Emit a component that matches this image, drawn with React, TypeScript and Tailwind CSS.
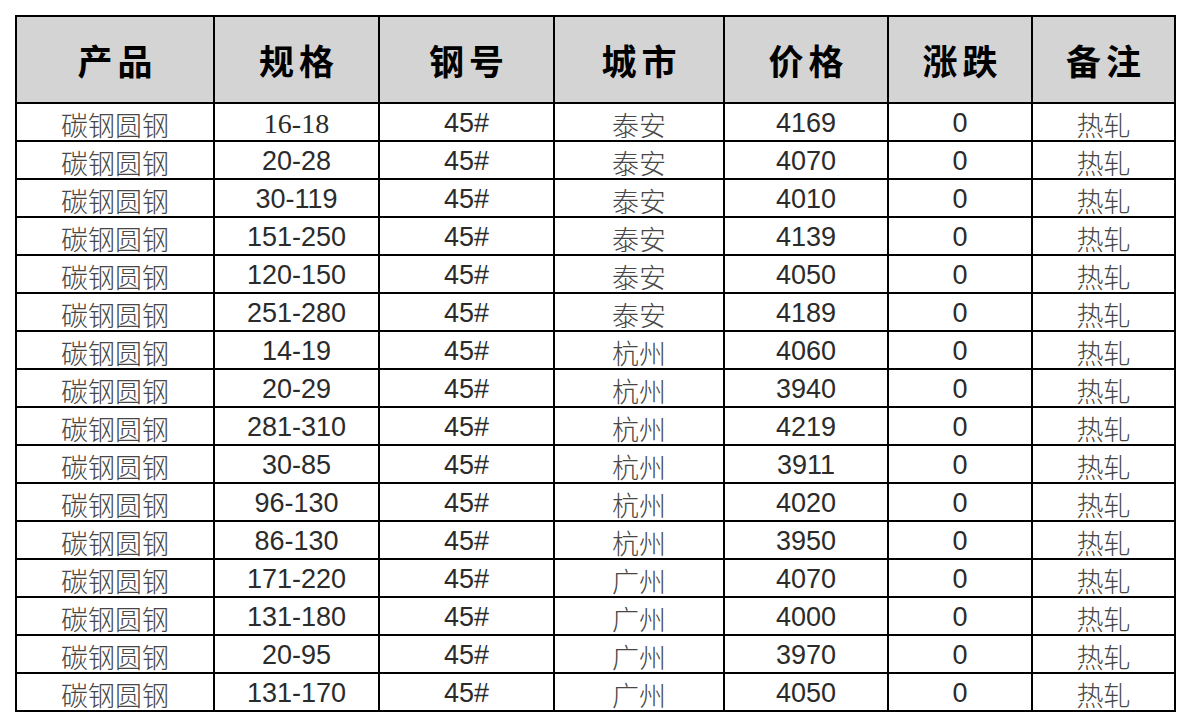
import React from 'react';

interface Row {
  spec: string;
  city: string;
  price: string;
}

const ROWS: Row[] = [
  { spec: '16-18', city: '泰安', price: '4169' },
  { spec: '20-28', city: '泰安', price: '4070' },
  { spec: '30-119', city: '泰安', price: '4010' },
  { spec: '151-250', city: '泰安', price: '4139' },
  { spec: '120-150', city: '泰安', price: '4050' },
  { spec: '251-280', city: '泰安', price: '4189' },
  { spec: '14-19', city: '杭州', price: '4060' },
  { spec: '20-29', city: '杭州', price: '3940' },
  { spec: '281-310', city: '杭州', price: '4219' },
  { spec: '30-85', city: '杭州', price: '3911' },
  { spec: '96-130', city: '杭州', price: '4020' },
  { spec: '86-130', city: '杭州', price: '3950' },
  { spec: '171-220', city: '广州', price: '4070' },
  { spec: '131-180', city: '广州', price: '4000' },
  { spec: '20-95', city: '广州', price: '3970' },
  { spec: '131-170', city: '广州', price: '4050' },
];

const HEADERS = ['产品', '规格', '钢号', '城市', '价格', '涨跌', '备注'];
const WIDTHS = ['w-[198px]', 'w-[165px]', 'w-[175px]', 'w-[170px]', 'w-[164px]', 'w-[144px]', 'w-[143px]'];

// cell styles
const cjkCell =
  "border-2 border-black p-0 pt-[4px] text-center text-[27px] leading-none font-light text-[#474747] font-['Noto_Sans_CJK_SC',sans-serif]";
const numCell =
  "border-2 border-black p-0 pt-[2px] text-center text-[27px] leading-none text-[#2b2b2b] font-['Liberation_Sans',Arial,sans-serif]";
const serifCell =
  "border-2 border-black p-0 pt-[3px] text-center text-[28px] leading-none text-[#2b2b2b] font-['Liberation_Serif','Times_New_Roman',serif]";

export default function App() {
  return (
    <div className="w-[1192px] h-[728px] bg-white pt-[15px] pl-[15px]">
      <table className="table-fixed border-collapse border-2 border-black w-[1161px]">
        <colgroup>
          {WIDTHS.map((w, i) => (
            <col key={i} className={w} />
          ))}
        </colgroup>
        <thead>
          <tr className="h-[87px] bg-[#d4d4d4]">
            {HEADERS.map(h => (
              <th
                key={h}
                className="border-2 border-black p-0 pt-[2px] pl-[5px] text-center align-middle text-[35px] font-semibold tracking-[5px] text-black font-['Noto_Sans_CJK_SC',sans-serif]"
              >
                {h}
              </th>
            ))}
          </tr>
        </thead>
        <tbody>
          {ROWS.map((r, i) => (
            <tr key={i} className="h-[38px]">
              <td className={cjkCell}>碳钢圆钢</td>
              <td className={i === 0 ? serifCell : numCell}>{r.spec}</td>
              <td className={numCell}>45#</td>
              <td className={cjkCell}>{r.city}</td>
              <td className={numCell}>{r.price}</td>
              <td className={numCell}>0</td>
              <td className={cjkCell}>热轧</td>
            </tr>
          ))}
        </tbody>
      </table>
    </div>
  );
}
